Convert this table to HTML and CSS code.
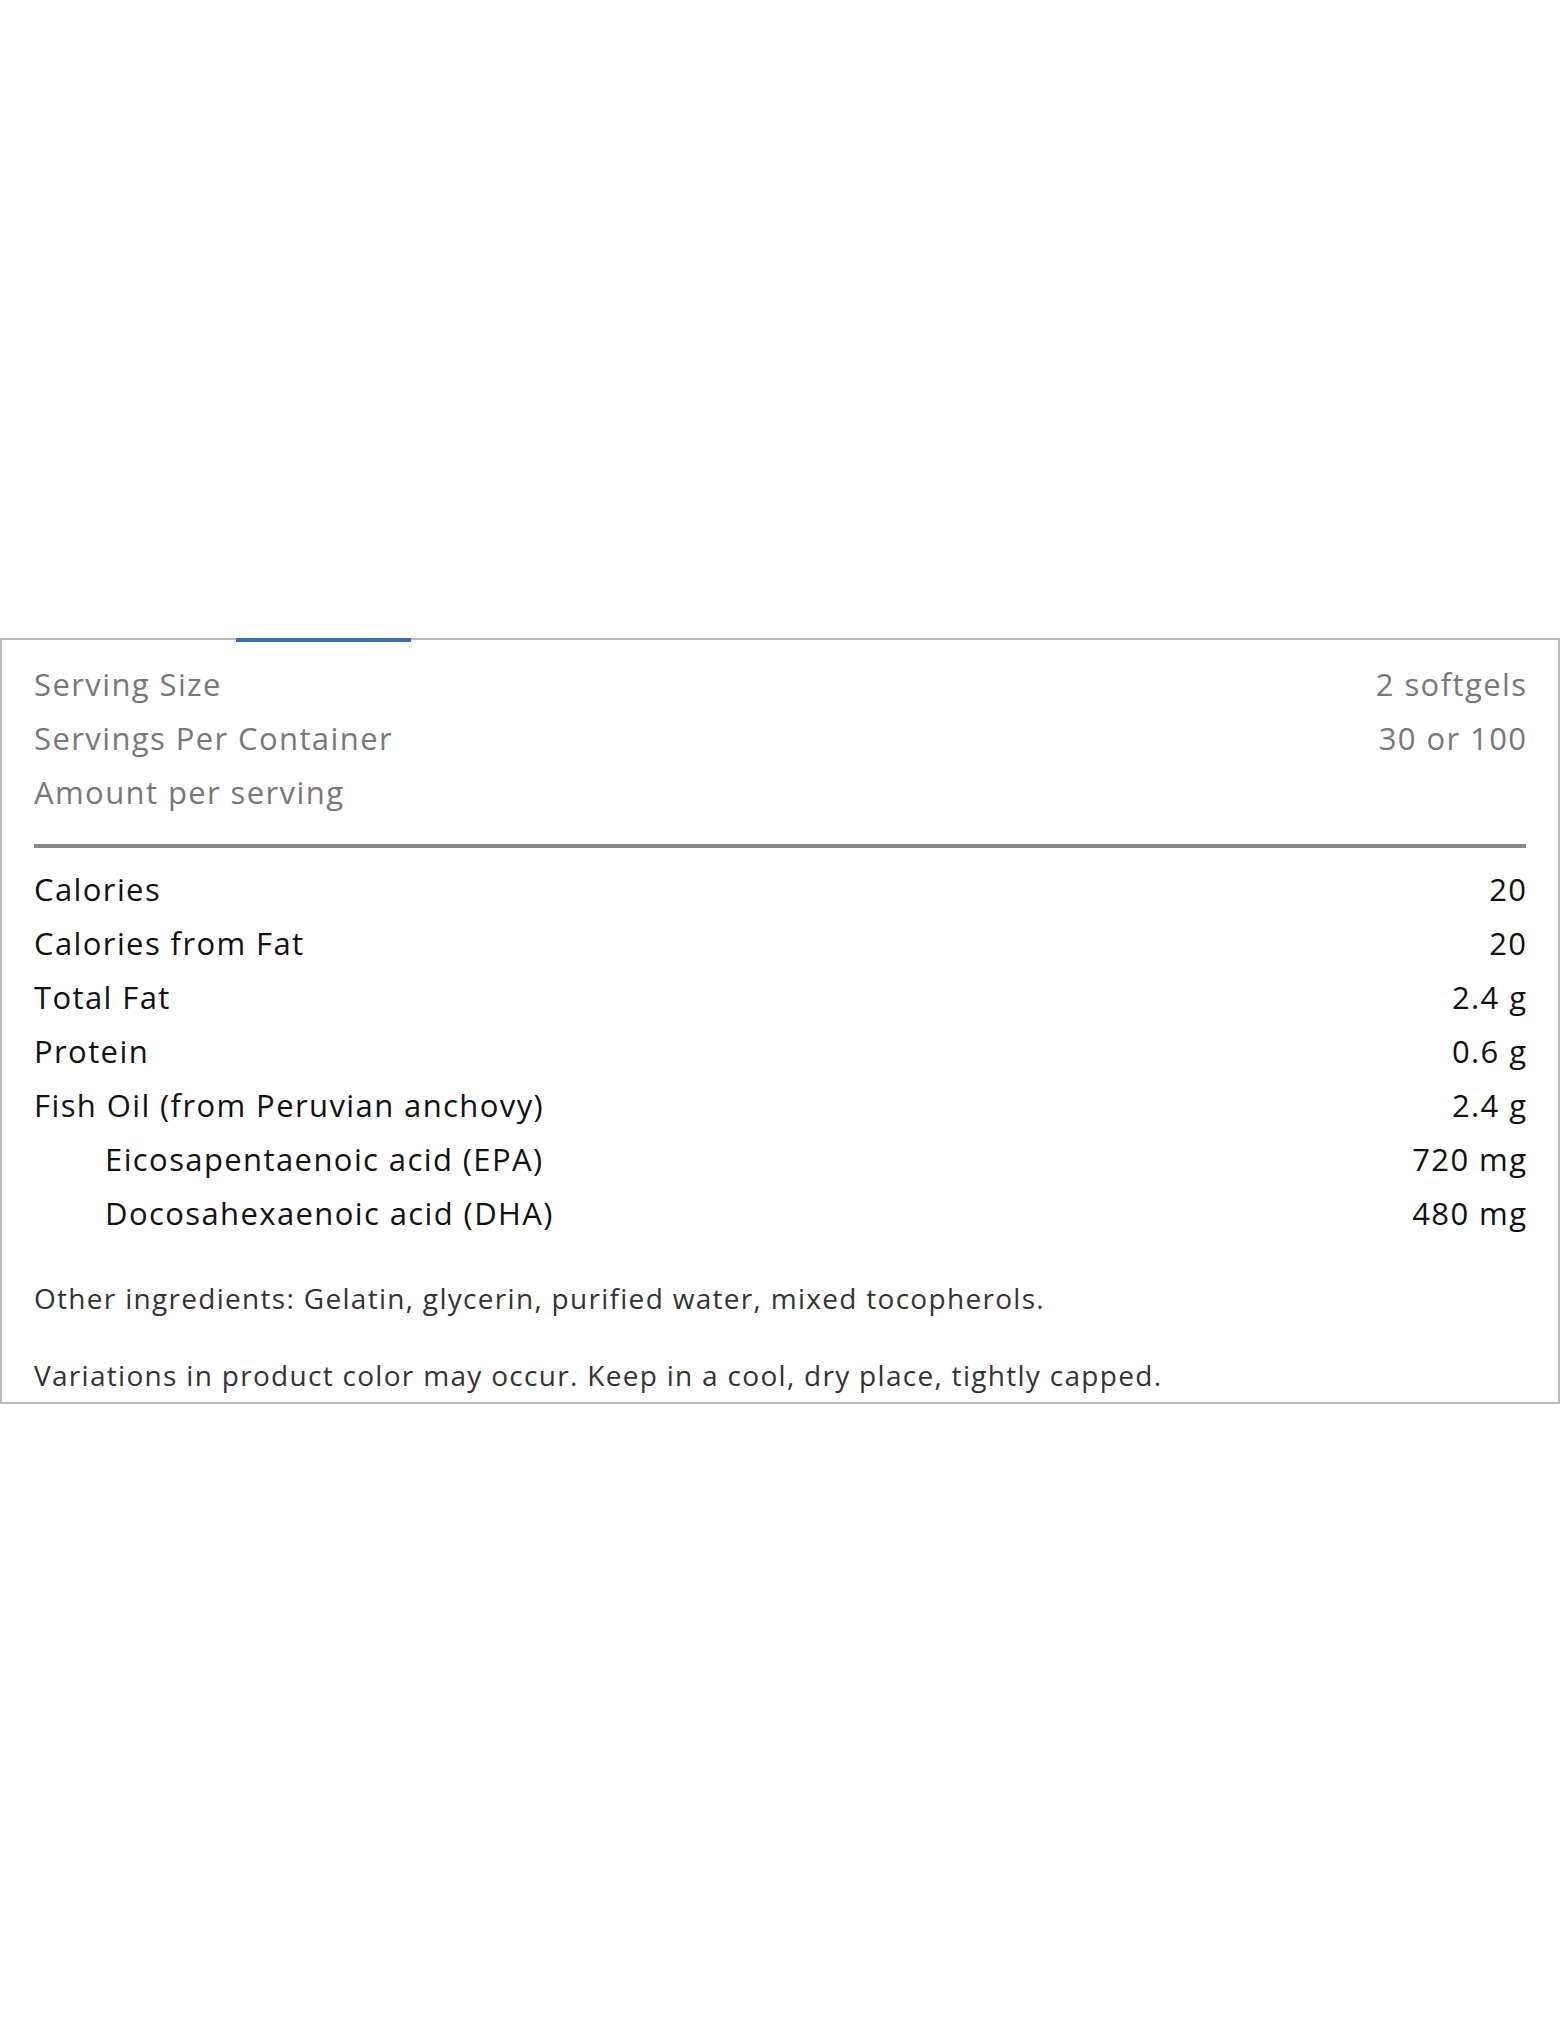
FILE: index.html
```html
<!DOCTYPE html>
<html>
<head>
<meta charset="utf-8">
<title>Supplement Facts</title>
<link rel="stylesheet" href="styles.css">
</head>
<body>
<div class="facts_box">
	<div class="tab_mark"></div>
	<div class="serving">
		<div class="row"><span>Serving Size</span><span class="val">2 softgels</span></div>
		<div class="row"><span>Servings Per Container</span><span class="val">30 or 100</span></div>
		<div class="row"><span>Amount per serving</span><span class="val"></span></div>
	</div>
	<div class="rule"></div>
	<div class="nutrients">
		<div class="row"><span>Calories</span><span class="val">20</span></div>
		<div class="row"><span>Calories from Fat</span><span class="val">20</span></div>
		<div class="row"><span>Total Fat</span><span class="val">2.4 g</span></div>
		<div class="row"><span>Protein</span><span class="val">0.6 g</span></div>
		<div class="row"><span>Fish Oil (from Peruvian anchovy)</span><span class="val">2.4 g</span></div>
		<div class="row sub"><span>Eicosapentaenoic acid (EPA)</span><span class="val">720 mg</span></div>
		<div class="row sub"><span>Docosahexaenoic acid (DHA)</span><span class="val">480 mg</span></div>
	</div>
	<p class="note first">Other ingredients: Gelatin, glycerin, purified water, mixed tocopherols.</p>
	<p class="note">Variations in product color may occur. Keep in a cool, dry place, tightly capped.</p>
</div>
</body>
</html>
```
FILE: styles.css
```css
body {
	margin: 0;
	padding-top: 638px;
	font-family: "Open Sans", Lato, sans-serif;
	background: #fff;
}
.facts_box {
	position: relative;
	border: 2px solid #bbb;
	padding: 17px 32px 9px 32px;
}
.tab_mark {
	position: absolute;
	top: -2px;
	left: 234px;
	width: 175px;
	height: 4px;
	background: #3a6db3;
}
.row {
	display: flex;
	justify-content: space-between;
	font-size: 31px;
	line-height: 54px;
	letter-spacing: 1.4px;
}
.row .val {
	margin-right: -1.4px;
}
.serving .row {
	color: #787878;
}
.nutrients .row {
	color: #111;
}
.row.sub {
	padding-left: 71px;
}
.rule {
	margin: 25px 0 14px 0;
	height: 4px;
	background: #888;
}
.note {
	margin: 41px 0 0 0;
	font-size: 28px;
	line-height: 36px;
	letter-spacing: 1.3px;
	color: #333;
}
.note.first {
	margin-top: 40px;
}
```
